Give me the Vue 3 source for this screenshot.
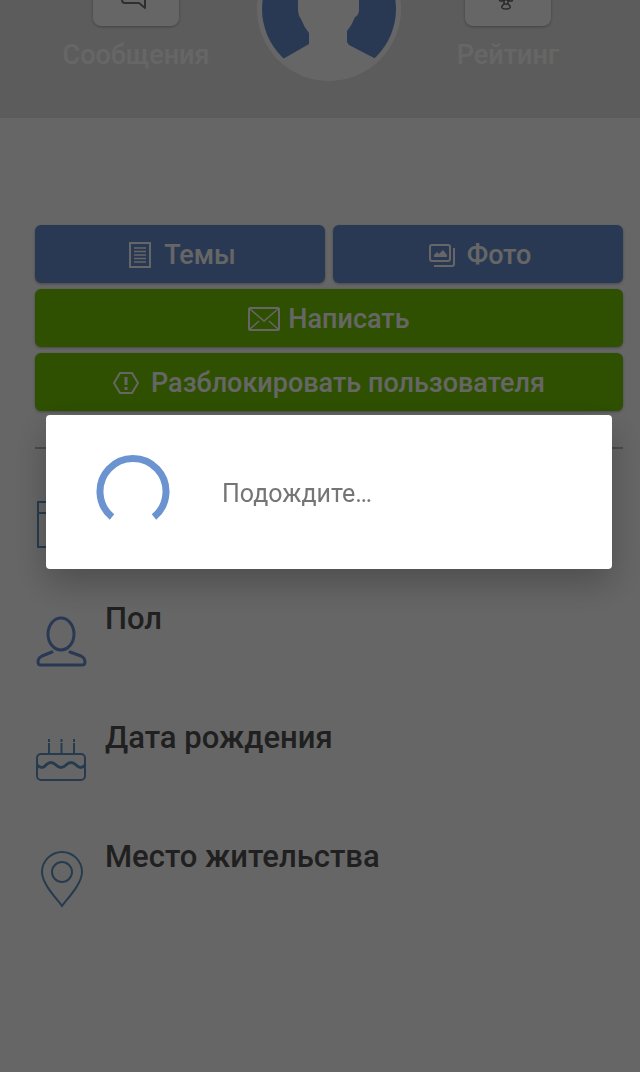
<script setup>
const details = [
  { icon: 'person', label: 'Пол' },
  { icon: 'cake', label: 'Дата рождения' },
  { icon: 'pin', label: 'Место жительства' },
]
</script>

<template>
  <div class="page">
    <header class="header">
      <a class="shortcut" href="#messages">
        <span class="tile">
          <svg width="40" height="40" viewBox="0 0 40 40" fill="none" stroke="#777" stroke-width="2" stroke-linejoin="round">
            <path d="M9 8h17q3 0 3 3v27l-6-5H9q-3 0-3-3V11q0-3 3-3z" />
          </svg>
        </span>
        <span>Сообщения</span>
      </a>
      <svg class="avatar" viewBox="0 0 144 144" role="img" aria-label="Аватар">
        <circle cx="72" cy="72" r="72" fill="#fff" />
        <circle cx="72" cy="72" r="67" fill="#698fcf" />
        <path d="M41 62Q41 23 72 23T102 62V74Q101 79 98 80Q95 88 90 94V105L92 108L119 122Q98 142 72 142Q46 142 26 122L52 107V96Q47 90 44 82Q41 78 41 72Z" fill="#fff" />
      </svg>
      <a class="shortcut" href="#rating">
        <span class="tile">
          <svg width="40" height="40" viewBox="0 0 40 40" fill="none" stroke="#666" stroke-width="1.500" stroke-linejoin="round">
            <path d="M8 10h20q0 13-8 21v3M8 10q0 13 8 21v3M11 29l1 2l3 0M25 29l-1 2l-3 0M16 31l2-2l2 2" />
            <path d="M16 34h4l2 2q1 3-4 3t-4-3z" />
          </svg>
        </span>
        <span>Рейтинг</span>
      </a>
    </header>

    <main class="content">
      <div class="actions">
        <button class="action" type="button">
          <svg width="24" height="28" viewBox="0 0 24 28" fill="none" stroke="currentColor" stroke-width="2">
            <path d="M2 2h20v24H2z" />
            <path d="M6 7h12M6 10.500h12M6 14h12M6 17.500h12M6 21h12" stroke-width="1.500" />
          </svg>
          <span>Темы</span>
        </button>
        <button class="action" type="button">
          <svg width="26" height="24" viewBox="0 0 26 24" fill="none" stroke="currentColor" stroke-width="2">
            <rect x="1" y="2" width="20" height="16" rx="2" />
            <path d="M25 5v16q0 2-2 2H5" />
            <path d="M5 14v-2l3-3l2 2l4-4l4 5v2z" fill="currentColor" stroke="none" />
          </svg>
          <span>Фото</span>
        </button>
        <button class="action wide write" type="button">
          <svg width="32" height="24" viewBox="0 0 32 24" fill="none" stroke="currentColor" stroke-width="2">
            <rect x="1" y="1" width="30" height="22" rx="1" />
            <path d="M2 2l14 12L30 2M2 22l9-8M30 22l-9-8" stroke-width="1.500" />
          </svg>
          <span>Написать</span>
        </button>
        <button class="action wide" type="button">
          <svg width="26" height="24" viewBox="0 0 26 24" fill="none" stroke="currentColor" stroke-width="2">
            <path d="M7 2h12l6 10l-6 10H7L1 12z" />
            <path d="M13 6v8M13 16v3" stroke-width="3" />
          </svg>
          <span>Разблокировать пользователя</span>
        </button>
      </div>

      <hr class="divider">

      <div class="detail">
        <svg class="detail-icon" viewBox="0 0 52 60" fill="none" stroke="#5f96c4" stroke-width="2">
          <path d="M3 6h46v45H3zM3 17h46M12 26h6v5h-6zM12 36h6v5h-6z" />
        </svg>
      </div>
      <div v-for="item in details" :key="item.icon" class="detail">
        <svg v-if="item.icon === 'person'" class="detail-icon" viewBox="0 0 52 60" fill="none" stroke="#698fcf" stroke-width="3" stroke-linecap="round" stroke-linejoin="round">
          <ellipse cx="26" cy="19" rx="13" ry="16" />
          <path d="M17 37L7 41Q3 43 3 47Q3 50 6 50H47Q50 50 50 47Q50 43 46 41L35 37" />
        </svg>
        <svg v-else-if="item.icon === 'cake'" class="detail-icon" viewBox="0 0 52 60" fill="none" stroke="#5f96c4" stroke-width="2">
          <rect x="2" y="20" width="48" height="26" rx="4" />
          <path d="M2 31q5 5 9 0q5-5 10 0q5 5 10 0q5-5 10 0q5 5 9 0" stroke-width="3" />
          <path d="M14 9v10M26.500 9v10M39 9v10" />
          <path d="M14 5v3M26.500 5v3M39 5v3" />
        </svg>
        <svg v-else class="detail-icon" viewBox="0 0 52 60" fill="none" stroke="#5f96c4" stroke-width="2">
          <path d="M27 53C22 46 7 31 7 19A20 20 0 0 1 47 19C47 31 32 46 27 53Z" />
          <circle cx="27" cy="19" r="10" />
        </svg>
        <h2 class="detail-label">{{ item.label }}</h2>
      </div>
    </main>

    <div class="scrim">
      <div class="dialog" role="dialog" aria-modal="true" aria-labelledby="wait-text">
        <svg class="spinner" viewBox="0 0 74 74" fill="none" stroke="#6a93cf" stroke-width="7" aria-hidden="true">
          <path d="M16 62A33 33 0 1 1 58 62" />
        </svg>
        <p id="wait-text" class="wait">Подождите…</p>
      </div>
    </div>
  </div>
</template>

<style>
body {
  margin: 0;
}
</style>

<style scoped>
.page {
  min-height: 100vh;
  background: #fff;
  font-family: Roboto, "Noto Sans", sans-serif;
  font-weight: 500;
}

.header {
  display: grid;
  grid-template-columns: 242fr 144px 214fr;
  grid-template-rows: 100%;
  align-items: end;
  box-sizing: border-box;
  height: 118px;
  padding: 0 25px 0 15px;
  overflow: hidden;
  background: #e7e7e7;
}

.shortcut {
  display: flex;
  flex-direction: column;
  align-items: center;
  gap: 12px;
  margin-bottom: 46px;
  color: #fff;
  font-size: 27px;
  line-height: 34px;
  text-decoration: none;
}

.tile {
  display: flex;
  align-items: flex-end;
  justify-content: center;
  box-sizing: border-box;
  width: 86px;
  height: 86px;
  padding-bottom: 16px;
  border-radius: 8px;
  background: #fff;
  box-shadow: 0 1px 3px rgba(0, 0, 0, 0.3);
}

.avatar {
  width: 144px;
  height: 144px;
  margin-bottom: 37px;
}

.content {
  padding: 107px 17px 0 35px;
}

.actions {
  display: grid;
  grid-template-columns: 1fr 1fr;
  gap: 6px 8px;
}

.action {
  display: flex;
  align-items: center;
  justify-content: center;
  gap: 12px;
  height: 58px;
  padding: 2px 0 0 4px;
  border: 0;
  border-radius: 6px;
  background: #698fcf;
  box-shadow: 0 1px 3px rgba(0, 0, 0, 0.3);
  color: #fff;
  font: inherit;
  font-size: 27px;
}

.wide {
  grid-column: 1 / -1;
  padding-left: 0;
  background: #73c800;
}

.write {
  gap: 8px;
}

.divider {
  height: 2px;
  margin: 36px 0 33px;
  border: 0;
  background: #bbb;
}

.detail {
  display: flex;
  gap: 18px;
  height: 119px;
}

.detail-icon {
  flex: none;
  width: 52px;
  height: 60px;
  margin-top: 14px;
  overflow: visible;
}

.detail-label {
  margin: 0;
  color: #505050;
  font-size: 31px;
  font-weight: 500;
  line-height: 36px;
}

.scrim {
  position: fixed;
  inset: 0;
  box-sizing: border-box;
  padding: 415px 28px 0 46px;
  background: rgba(0, 0, 0, 0.6);
}

.dialog {
  display: flex;
  align-items: center;
  gap: 52px;
  padding: 40px 50px;
  border-radius: 4px;
  background: #fff;
  box-shadow: 0 14px 36px rgba(0, 0, 0, 0.25);
}

.spinner {
  flex: none;
  width: 74px;
  height: 74px;
}

.wait {
  margin: 0;
  padding-top: 4px;
  color: #757575;
  font-size: 25px;
  font-weight: 400;
  line-height: 32px;
}
</style>
